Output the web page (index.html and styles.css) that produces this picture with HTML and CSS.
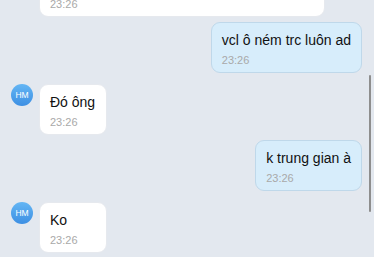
FILE: index.html
```html
<!DOCTYPE html>
<html lang="vi">
<head>
    <meta charset="UTF-8">
    <meta name="viewport" content="width=device-width, initial-scale=1.0">
    <title>Chat</title>
    <link rel="stylesheet" href="styles.css">
</head>
<body>
    <div class="chat">
        <div class="messages">
            <!-- tin nhắn phía trên, đã cuộn khuất -->
            <div class="row in first">
                <div class="avatar hidden">HM</div>
                <div class="bubble wide">
                    <p class="text"></p>
                    <span class="time">23:26</span>
                </div>
            </div>

            <div class="row out">
                <div class="bubble">
                    <p class="text">vcl ô ném trc luôn ad</p>
                    <span class="time">23:26</span>
                </div>
            </div>

            <div class="row in">
                <div class="avatar">HM</div>
                <div class="bubble">
                    <p class="text">Đó ông</p>
                    <span class="time">23:26</span>
                </div>
            </div>

            <div class="row out">
                <div class="bubble">
                    <p class="text">k trung gian à</p>
                    <span class="time">23:26</span>
                </div>
            </div>

            <div class="row in">
                <div class="avatar">HM</div>
                <div class="bubble">
                    <p class="text">Ko</p>
                    <span class="time">23:26</span>
                </div>
            </div>
        </div>

        <!-- thanh cuộn -->
        <div class="scrollbar"></div>
    </div>
</body>
</html>
```

FILE: styles.css
```css
:root {
    --bg: #e3e8ef;
    --incoming: #ffffff;
    --outgoing: #d7edfb;
    --outgoing-border: #bfd8ea;
    --text: #111111;
    --muted: #a9a9a9;
}

* {
    box-sizing: border-box;
    margin: 0;
    padding: 0;
}

html, body {
    height: 100%;
}

body {
    background-color: var(--bg);
    color: var(--text);
    font-family: "Liberation Sans", Arial, sans-serif;
    overflow: hidden;
}

.chat {
    position: relative;
    height: 100%;
}

.messages {
    display: flex;
    flex-direction: column;
    padding: 0 12px 0 11px;
    margin-top: -45px;
}

.row {
    display: flex;
    align-items: flex-start;
    margin-top: 5px;
}

.row.in {
    margin-top: 11px;
}

.row.out {
    justify-content: flex-end;
}

.avatar {
    width: 22px;
    height: 22px;
    border-radius: 50%;
    background: linear-gradient(180deg, #64b6f4, #3d8fe3);
    color: white;
    font-size: 8.5px;
    line-height: 22px;
    text-align: center;
    flex-shrink: 0;
    margin-right: 6px;
}

.avatar.hidden {
    visibility: hidden;
}

.bubble {
    min-width: 68px;
    padding: 7px 10px 5px;
    border-radius: 9px;
    background-color: var(--incoming);
    border: 1px solid #e6e9ee;
}

.bubble.wide {
    width: 286px;
}

.row.out .bubble {
    background-color: var(--outgoing);
    border-color: var(--outgoing-border);
}

.text {
    font-size: 14px;
    line-height: 20px;
    min-height: 20px;
    white-space: nowrap;
}

.time {
    display: block;
    margin-top: 3px;
    font-size: 11px;
    line-height: 14px;
    color: var(--muted);
}

.scrollbar {
    position: absolute;
    right: 3px;
    top: 120px;
    bottom: 0;
    width: 2px;
    border-radius: 1px;
    background-color: #8e8e8e;
}
```
